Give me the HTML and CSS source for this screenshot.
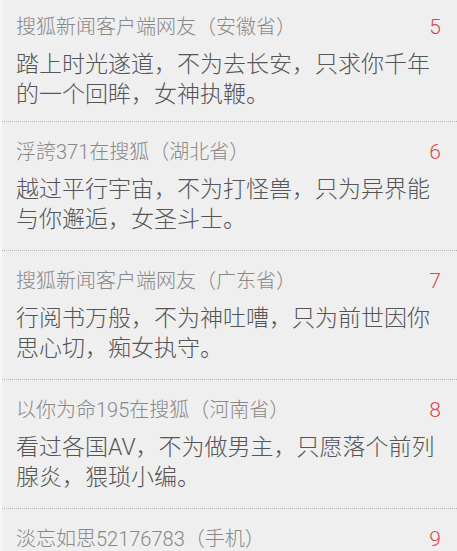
FILE: index.html
```html
<!DOCTYPE html>
<html lang="zh-CN">
<head>
<meta charset="utf-8">
<link rel="stylesheet" href="styles.css">
</head>
<body>
<ul class="list">
  <li class="item">
    <div class="meta"><span class="name">搜狐新闻客户端网友（安徽省）</span><span class="floor">5</span></div>
    <p class="text">踏上时光遂道，不为去长安，只求你千年的一个回眸，女神执鞭。</p>
  </li>
  <li class="item">
    <div class="meta"><span class="name">浮誇371在搜狐（湖北省）</span><span class="floor">6</span></div>
    <p class="text">越过平行宇宙，不为打怪兽，只为异界能与你邂逅，女圣斗士。</p>
  </li>
  <li class="item">
    <div class="meta"><span class="name">搜狐新闻客户端网友（广东省）</span><span class="floor">7</span></div>
    <p class="text">行阅书万般，不为神吐嘈，只为前世因你思心切，痴女执守。</p>
  </li>
  <li class="item">
    <div class="meta"><span class="name">以你为命195在搜狐（河南省）</span><span class="floor">8</span></div>
    <p class="text">看过各国AV，不为做男主，只愿落个前列腺炎，猥琐小编。</p>
  </li>
  <li class="item">
    <div class="meta"><span class="name">淡忘如思52176783（手机）</span><span class="floor">9</span></div>
    <p class="text">&nbsp;</p>
  </li>
</ul>
</body>
</html>
```
FILE: styles.css
```css
html, body {
  margin: 0;
  padding: 0;
  background: #efefef;
  overflow: hidden;
}
body {
  font-family: Roboto, "Noto Sans CJK SC", sans-serif;
  font-weight: 300;
  border-left: 2px solid #f6f6f6;
}
.list {
  list-style: none;
  margin: -3px 0 0 0;
  padding: 0;
}
.item {
  padding: 17px 16px 15px 14px;
  border-bottom: 1px dotted #b4b4b4;
}
.item:first-child {
  padding-bottom: 11px;
}
.meta {
  display: flex;
  justify-content: space-between;
  align-items: center;
  height: 26px;
  line-height: 26px;
}
.name {
  font-size: 20px;
  color: #888888;
}
.floor {
  font-size: 21px;
  color: #d9464e;
}
.text {
  margin: 10px 0 0 0;
  font-size: 23px;
  line-height: 30px;
  color: #555555;
}
```
